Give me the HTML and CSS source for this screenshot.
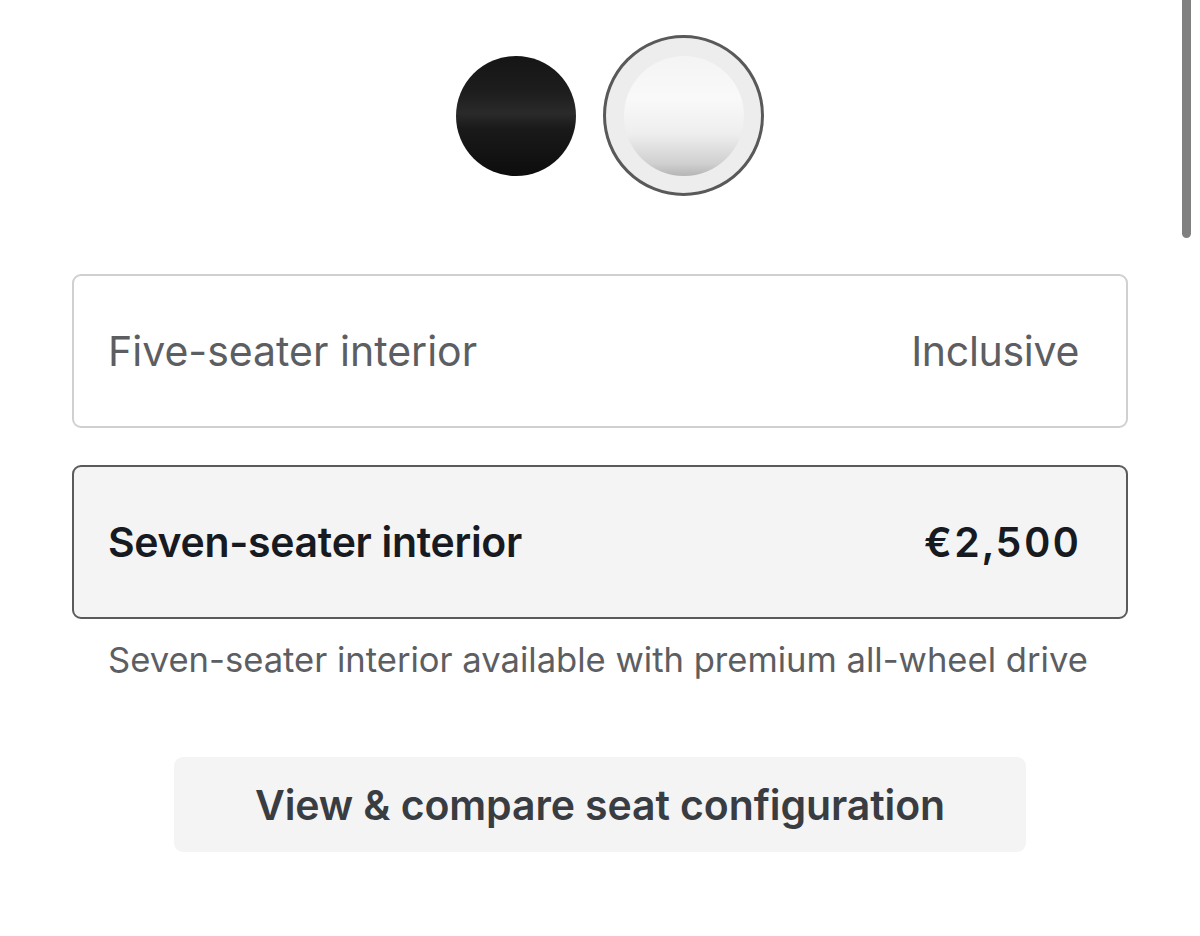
FILE: index.html
```html
<!DOCTYPE html>
<html lang="en">
<head>
<meta charset="utf-8">
<title>Interior</title>
<link rel="stylesheet" href="styles.css">
</head>
<body>
<main class="page">
  <div class="swatches">
    <div class="swatch swatch-black"></div>
    <div class="swatch-ring"><div class="swatch swatch-white"></div></div>
  </div>
  <div class="option">
    <span class="option-name">Five-seater interior</span>
    <span class="option-price">Inclusive</span>
  </div>
  <div class="option option-selected">
    <span class="option-name">Seven-seater interior</span>
    <span class="option-price">€2,500</span>
  </div>
  <p class="note">Seven-seater interior available with premium all-wheel drive</p>
  <div class="btn-row">
    <button class="compare-btn">View &amp; compare seat configuration</button>
  </div>
</main>
<div class="scrollbar"></div>
</body>
</html>
```
FILE: styles.css
```css
html, body {
  margin: 0;
  padding: 0;
  background: #ffffff;
}
body {
  font-family: Inter, "Noto Sans", sans-serif;
  overflow: hidden;
  height: 936px;
}
.page {
  width: 1056px;
  margin-left: 72px;
  display: flex;
  flex-direction: column;
}
.swatches {
  display: flex;
  justify-content: flex-start;
  align-items: center;
  gap: 27px;
  margin-top: 35px;
  padding-left: 384px;
  height: 161px;
}
.swatch {
  border-radius: 50%;
}
.swatch-black {
  width: 120px;
  height: 120px;
  background: linear-gradient(180deg, #151515 0%, #1d1d1d 30%, #2a2a2a 48%, #1a1a1a 60%, #0d0d0d 100%);
}
.swatch-ring {
  width: 155px;
  height: 155px;
  border: 3px solid #595959;
  border-radius: 50%;
  background: #ededed;
  display: flex;
  align-items: center;
  justify-content: center;
}
.swatch-white {
  width: 120px;
  height: 120px;
  background: linear-gradient(180deg, #f4f4f4 0%, #f9f9f9 35%, #eeeeee 65%, #cfcfcf 90%, #b5b5b5 100%);
}
.option {
  box-sizing: border-box;
  height: 154px;
  border: 2px solid #d0d0d0;
  border-radius: 9px;
  display: flex;
  align-items: center;
  justify-content: space-between;
  padding: 0 47px 0 34px;
  font-size: 41px;
  color: #5c5e62;
  margin-top: 78px;
}
.option-price {
  letter-spacing: -0.3px;
}
.option-selected {
  margin-top: 37px;
  border-color: #5a5a5a;
  background: #f4f4f4;
  color: #171a20;
  font-weight: 600;
  letter-spacing: -0.3px;
}
.option-selected .option-price {
  font-weight: 600;
  font-variant-numeric: tabular-nums;
  letter-spacing: 2px;
  margin-right: -2px;
}
.note {
  margin: 20px 0 0 36px;
  font-size: 34.6px;
  color: #5c5e62;
  line-height: 40px;
}
.btn-row {
  display: flex;
  justify-content: center;
  margin-top: 78px;
}
.compare-btn {
  width: 852px;
  height: 95px;
  border: none;
  border-radius: 9px;
  background: #f4f4f4;
  color: #393c41;
  font-family: inherit;
  font-size: 41px;
  font-weight: 600;
  letter-spacing: -0.1px;
}
.scrollbar {
  position: absolute;
  top: 0;
  left: 1182px;
  width: 9px;
  height: 238px;
  border-radius: 0 0 5px 5px;
  background: #808080;
}
```
